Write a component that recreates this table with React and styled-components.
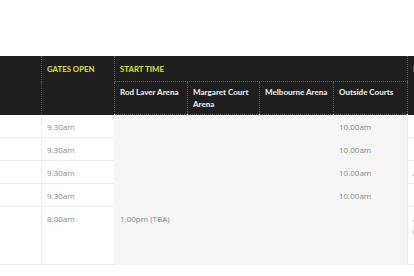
import React from "react";
import styled, { createGlobalStyle } from "styled-components";

const headBg = "#1f1f1f";
const yellow = "#cdd72a";
const dots = "#5a5a5a";
const line = "#ececec";
const shade = "#f6f6f6";

const GlobalStyle = createGlobalStyle`
  html, body { margin: 0; padding: 0; background: #fff; }
  body { font-family: "Open Sans", "Liberation Sans", sans-serif; }
`;

const Page = styled.div`
  width: 414px;
  height: 276px;
  overflow: hidden;
  padding-top: 56px;
  box-sizing: border-box;
`;

const Table = styled.table`
  margin-left: -39px;
  border-collapse: collapse;
  table-layout: fixed;
  width: 526px;
`;

const HeadCell = styled.th`
  background: ${headBg};
  color: ${yellow};
  font-family: Lato, "Liberation Sans", sans-serif;
  font-weight: 900;
  font-size: 7.8px;
  text-transform: uppercase;
  text-align: left;
  vertical-align: top;
  padding: 8px 5px 0;
  height: 17px;
  border-left: 1px dotted ${dots};
  border-bottom: ${(p) => (p.$split ? `1px dotted ${dots}` : "none")};
`;

const SubCell = styled.th`
  background: ${headBg};
  color: #e6e6e6;
  font-family: Lato, "Liberation Sans", sans-serif;
  font-weight: 900;
  font-size: 8px;
  line-height: 12px;
  text-align: left;
  vertical-align: top;
  padding: 4px 5px 0;
  height: 28px;
  border-left: 1px dotted ${dots};
  border-bottom: 1px dotted ${dots};
`;

const Cell = styled.td`
  font-size: 8px;
  line-height: 12px;
  color: ${(p) => (p.$dim ? "#c8c8c8" : "#888")};
  vertical-align: top;
  padding: 6px 5px 0;
  height: ${(p) => (p.$tall ? "51px" : "16px")};
  background: ${(p) => (p.$shaded ? shade : "#fff")};
  border-left: 1px solid ${(p) => (p.$shaded ? shade : line)};
  border-bottom: 1px solid ${(p) => (p.$shaded ? shade : line)};
  white-space: nowrap;
  overflow: hidden;
`;

const rows = [
  { session: "Day", gates: "9.30am", outside: "10.00am", note: "" },
  { session: "", gates: "9.30am", outside: "10.00am", note: "" },
  { session: "Night", gates: "9.30am", outside: "10.00am", note: "Available" },
  { session: "", gates: "9.30am", outside: "10.00am", note: "" },
];

function App() {
  return (
    <Page>
      <GlobalStyle />
      <Table>
        <colgroup>
          <col style={{ width: 80 }} />
          <col style={{ width: 73 }} />
          <col style={{ width: 73 }} />
          <col style={{ width: 72 }} />
          <col style={{ width: 74 }} />
          <col style={{ width: 74 }} />
          <col style={{ width: 80 }} />
        </colgroup>
        <thead>
          <tr>
            <HeadCell rowSpan={2}>Session</HeadCell>
            <HeadCell rowSpan={2}>Gates Open</HeadCell>
            <HeadCell colSpan={4} $split>
              Start Time
            </HeadCell>
            <HeadCell rowSpan={2}>Details</HeadCell>
          </tr>
          <tr>
            <SubCell>Rod Laver Arena</SubCell>
            <SubCell>Margaret Court Arena</SubCell>
            <SubCell>Melbourne Arena</SubCell>
            <SubCell>Outside Courts</SubCell>
          </tr>
        </thead>
        <tbody>
          {rows.map((r, i) => (
            <tr key={i}>
              <Cell $dim>{r.session}</Cell>
              <Cell>{r.gates}</Cell>
              <Cell $shaded />
              <Cell $shaded />
              <Cell $shaded />
              <Cell $shaded>{r.outside}</Cell>
              <Cell>{r.note}</Cell>
            </tr>
          ))}
          <tr>
            <Cell $tall />
            <Cell $tall>8.00am</Cell>
            <Cell $tall $shaded colSpan={4}>
              1.00pm (TBA)
            </Cell>
            <Cell $tall>
              Arena pass
              <br />
              (ground pass)
            </Cell>
          </tr>
        </tbody>
      </Table>
    </Page>
  );
}

export default App;
